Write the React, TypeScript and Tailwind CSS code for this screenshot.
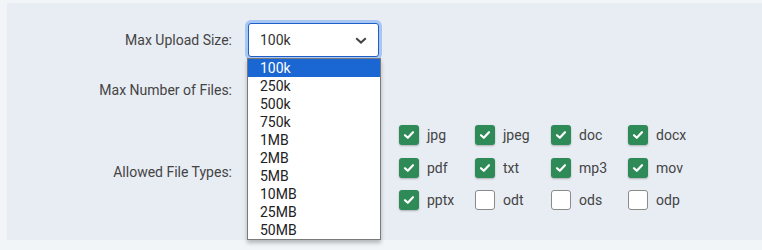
import React from "react";

const sizes = ["100k", "250k", "500k", "750k", "1MB", "2MB", "5MB", "10MB", "25MB", "50MB"];
const types: [string, boolean][] = [
  ["jpg", true], ["jpeg", true], ["doc", true], ["docx", true],
  ["pdf", true], ["txt", true], ["mp3", true], ["mov", true],
  ["pptx", true], ["odt", false], ["ods", false], ["odp", false],
];

function Check({ checked }: { checked: boolean }) {
  return checked ? (
    <span className="flex h-[20px] w-[20px] items-center justify-center rounded-[3px] bg-[#2e8a57] shadow-[0_1px_2px_rgba(0,0,0,0.25)]">
      <svg width="12" height="10" viewBox="0 0 12 10">
        <polyline points="2,5.2 4.8,7.8 10,2.2" fill="none" stroke="#fff" strokeWidth="2.2" strokeLinecap="round" strokeLinejoin="round" />
      </svg>
    </span>
  ) : (
    <span className="block h-[20px] w-[20px] rounded-[3px] border border-[#8a8a8a] bg-white" />
  );
}

export default function App() {
  return (
    <div className="h-[250px] w-[762px] bg-[#f1f5f8] pl-[7px] pt-[3px] font-['Roboto',sans-serif] text-[14px] text-[#444]">
      <div className="flex h-[237px] flex-col bg-[#e8ecf3] pt-[20px]">
        <div className="flex h-[34px] items-center">
          <div className="w-[225px] text-right leading-[20px]">Max Upload Size:</div>
          <div className="relative ml-[16px] h-[34px] w-[131px]">
            <div className="flex h-[34px] w-[131px] items-center justify-between rounded-[3px] border border-[#1f5fc8] bg-white pl-[11px] pr-[11px] text-[#333] shadow-[0_0_0_3px_#a8c6f4]">
              <span>100k</span>
              <svg width="12" height="7" viewBox="0 0 12 7">
                <polyline points="1.2,1.2 6,5.6 10.8,1.2" fill="none" stroke="#444" strokeWidth="2" />
              </svg>
            </div>
            <div className="absolute left-[-1px] top-[35px] z-10 w-[134px] border border-[#7a7a7a] bg-white shadow-[0_3px_4px_rgba(0,0,0,0.25)]">
              {sizes.map((s, i) => (
                <div
                  key={s}
                  className={
                    i === 0
                      ? "h-[18px] bg-[#1a66d2] pl-[12px] leading-[18px] text-white"
                      : "h-[18px] pl-[12px] leading-[18px] text-[#222]"
                  }
                >
                  {s}
                </div>
              ))}
            </div>
          </div>
        </div>
        <div className="mt-[16px] flex h-[34px] items-center">
          <div className="w-[225px] text-right leading-[20px]">Max Number of Files:</div>
        </div>
        <div className="mt-[18px] flex">
          <div className="w-[225px] pt-[37px] text-right leading-[20px]">Allowed File Types:</div>
          <div className="ml-[167px] grid grid-cols-[76px_76px_77px_76px] gap-y-[12.5px]">
            {types.map(([t, c]) => (
              <label key={t} className="flex h-[20px] items-center gap-[8px]">
                <Check checked={c} />
                <span className="leading-[20px] text-[#444]">{t}</span>
              </label>
            ))}
          </div>
        </div>
      </div>
    </div>
  );
}
